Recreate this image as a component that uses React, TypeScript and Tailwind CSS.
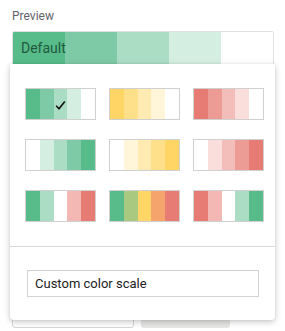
import React from "react";

const G = ["#57bb8a", "#7fcaa6", "#abdcc4", "#d5eee2", "#ffffff"];
const Y = ["#ffd666", "#ffe08a", "#ffeab2", "#fff5d9", "#ffffff"];
const R = ["#e67c73", "#ec9c95", "#f3bdb9", "#f9dedc", "#ffffff"];

const swatches: string[][] = [
  G,
  Y,
  R,
  [...G].reverse(),
  [...Y].reverse(),
  [...R].reverse(),
  ["#57bb8a", "#abdcc4", "#ffffff", "#f3b8b3", "#e67c73"],
  ["#57bb8a", "#a8c97f", "#ffd666", "#f5a56c", "#e67c73"],
  ["#e67c73", "#f3b8b3", "#ffffff", "#abdcc4", "#57bb8a"],
];

function Swatch({ colors, checked }: { colors: string[]; checked?: boolean }) {
  return (
    <div className="flex h-[32px] w-[71px] border border-[#d0d0d0]">
      {colors.map((c, i) => (
        <div key={i} className="relative flex-1" style={{ backgroundColor: c }}>
          {checked && i === 2 ? (
            <svg
              className="absolute left-[1px] top-[12px]"
              width="11"
              height="9"
              viewBox="0 0 11 9"
            >
              <path d="M1.2 4.8 L4 7.8 L9.8 0.6" fill="none" stroke="#111" strokeWidth="1.6" />
            </svg>
          ) : null}
        </div>
      ))}
    </div>
  );
}

export default function App() {
  const font = { fontFamily: "Roboto, 'Noto Sans', Arial, sans-serif" };
  return (
    <div className="relative h-[331px] w-[285px] overflow-hidden bg-white" style={font}>
      <div className="px-[12px] pt-[9px]">
        <div className="text-[12px] leading-[14px] text-[#5f6368]">Preview</div>
        <div className="mt-[8px] flex h-[35px] w-[262px] overflow-hidden rounded-[2px] border border-[#e0e0e0]">
          <div className="relative flex-1 bg-[#57bb8a]">
            <span className="absolute left-[8px] top-[7px] whitespace-nowrap text-[14px] leading-[18px] text-[#1f5a3c]">
              Default
            </span>
          </div>
          <div className="flex-1 bg-[#7fcaa6]" />
          <div className="flex-1 bg-[#abdcc4]" />
          <div className="flex-1 bg-[#d5eee2]" />
          <div className="flex-1 bg-white" />
        </div>
        <div className="mt-[232px] flex gap-[7px]">
          <div className="h-[30px] w-[122px] rounded-[3px] border border-[#d6d6d6] bg-white" />
          <div className="h-[30px] w-[89px] rounded-[3px] bg-[#e6e6e4]" />
        </div>
      </div>

      <div className="absolute left-[10px] top-[64px] h-[256px] w-[265px] rounded-b-[4px] bg-white shadow-[0_2px_6px_rgba(0,0,0,0.22),0_0_2px_rgba(0,0,0,0.08)]">
        <div className="grid grid-cols-[71px_71px_71px] gap-x-[13px] gap-y-[19px] pl-[15px] pt-[24px]">
          {swatches.map((s, i) => (
            <Swatch key={i} colors={s} checked={i === 0} />
          ))}
        </div>
        <div className="mt-[24px] h-px w-full bg-[#dadada]" />
        <div className="ml-[17px] mt-[23px] flex h-[27px] w-[232px] items-center border border-[#d3d3d3] px-[7px] text-[13px] text-[#222]">
          Custom color scale
        </div>
      </div>
    </div>
  );
}
